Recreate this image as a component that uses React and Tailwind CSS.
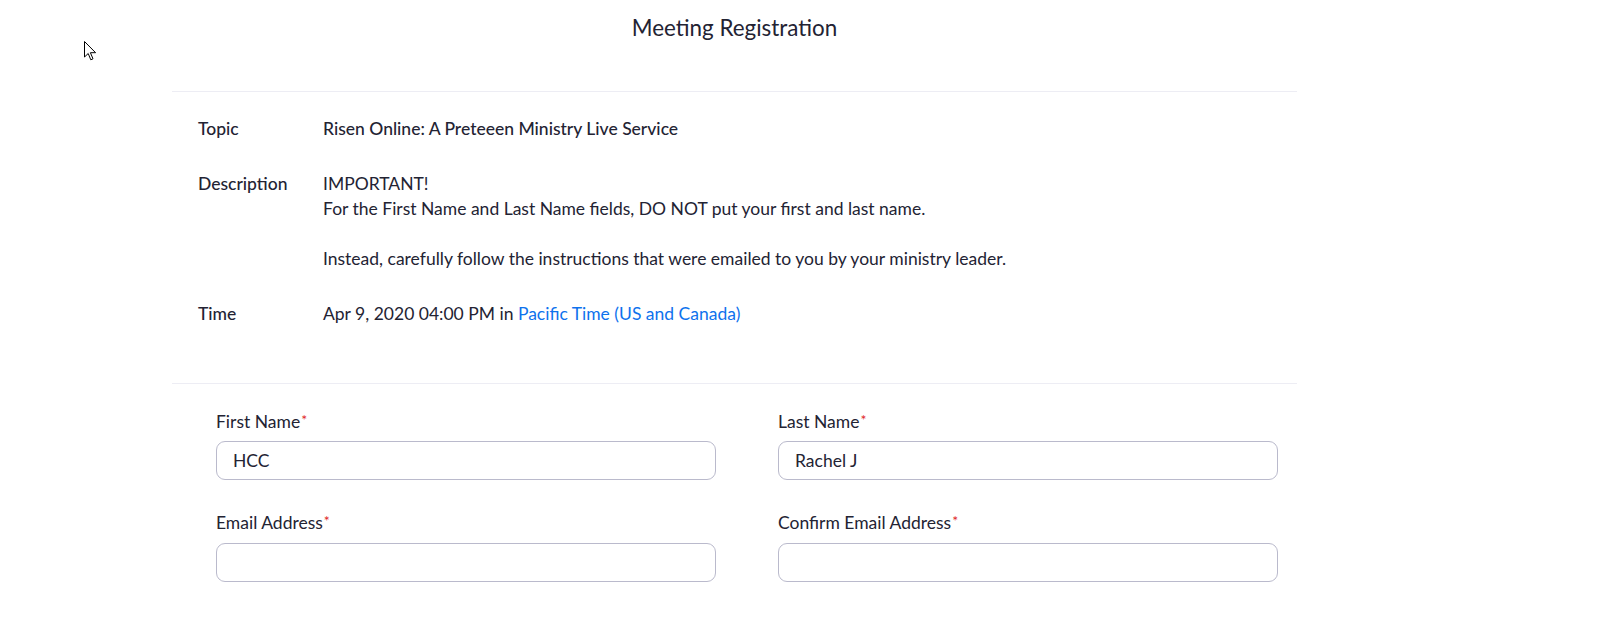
export default function App() {
  const Req = () => <span className="text-[#e02828] text-[14px] align-top relative top-[-2px] ml-[1px]">*</span>;
  return (
    <div className="relative w-[1610px] h-[625px] bg-white text-[#232333] overflow-hidden" style={{ fontFamily: 'Lato, "Open Sans", sans-serif' }}>
      <svg className="absolute left-[84px] top-[41px]" width="13" height="20" viewBox="0 0 13 20">
        <path d="M0.5 0.5 L0.5 16 L4.2 12.5 L6.8 18.8 L9 17.8 L6.4 11.7 L11.6 11.7 Z" fill="white" stroke="black" strokeWidth="1" strokeLinejoin="miter" />
      </svg>
      <div className="w-[1125px] ml-[172px]">
        <div className="h-[56px] flex items-center justify-center text-[22.4px] leading-[28px]">Meeting Registration</div>
        <div className="h-[35px]"></div>
        <div className="border-t border-[#ededf4]"></div>
        <div className="pl-[26px] pt-[24px] pb-[57px] text-[17.5px] leading-[25px]">
          <div className="flex">
            <div className="w-[125px] font-medium">Topic</div>
            <div className="font-medium">Risen Online: A Preteeen Ministry Live Service</div>
          </div>
          <div className="flex mt-[30px]">
            <div className="w-[125px] font-medium">Description</div>
            <div>
              <div>IMPORTANT!</div>
              <div>For the First Name and Last Name fields, DO NOT put your first and last name.</div>
              <div className="h-[25px]"></div>
              <div>Instead, carefully follow the instructions that were emailed to you by your ministry leader.</div>
            </div>
          </div>
          <div className="flex mt-[30px]">
            <div className="w-[125px] font-medium">Time</div>
            <div>Apr 9, 2020 04:00 PM in <span className="text-[#0e72ed]">Pacific Time (US and Canada)</span></div>
          </div>
        </div>
        <div className="border-t border-[#ededf4]"></div>
        <div className="pl-[44px] pt-[25px] text-[17.5px] leading-[25px]">
          <div className="flex gap-[62px]">
            <div className="w-[500px]">
              <div>First Name<Req /></div>
              <div className="mt-[7px] h-[39px] border border-[#babacc] rounded-[9px] flex items-center px-[16px]">HCC</div>
            </div>
            <div className="w-[500px]">
              <div>Last Name<Req /></div>
              <div className="mt-[7px] h-[39px] border border-[#babacc] rounded-[9px] flex items-center px-[16px]">Rachel J</div>
            </div>
          </div>
          <div className="flex gap-[62px] mt-[30px]">
            <div className="w-[500px]">
              <div>Email Address<Req /></div>
              <div className="mt-[8px] h-[39px] border border-[#babacc] rounded-[9px]"></div>
            </div>
            <div className="w-[500px]">
              <div>Confirm Email Address<Req /></div>
              <div className="mt-[8px] h-[39px] border border-[#babacc] rounded-[9px]"></div>
            </div>
          </div>
        </div>
      </div>
    </div>
  );
}
